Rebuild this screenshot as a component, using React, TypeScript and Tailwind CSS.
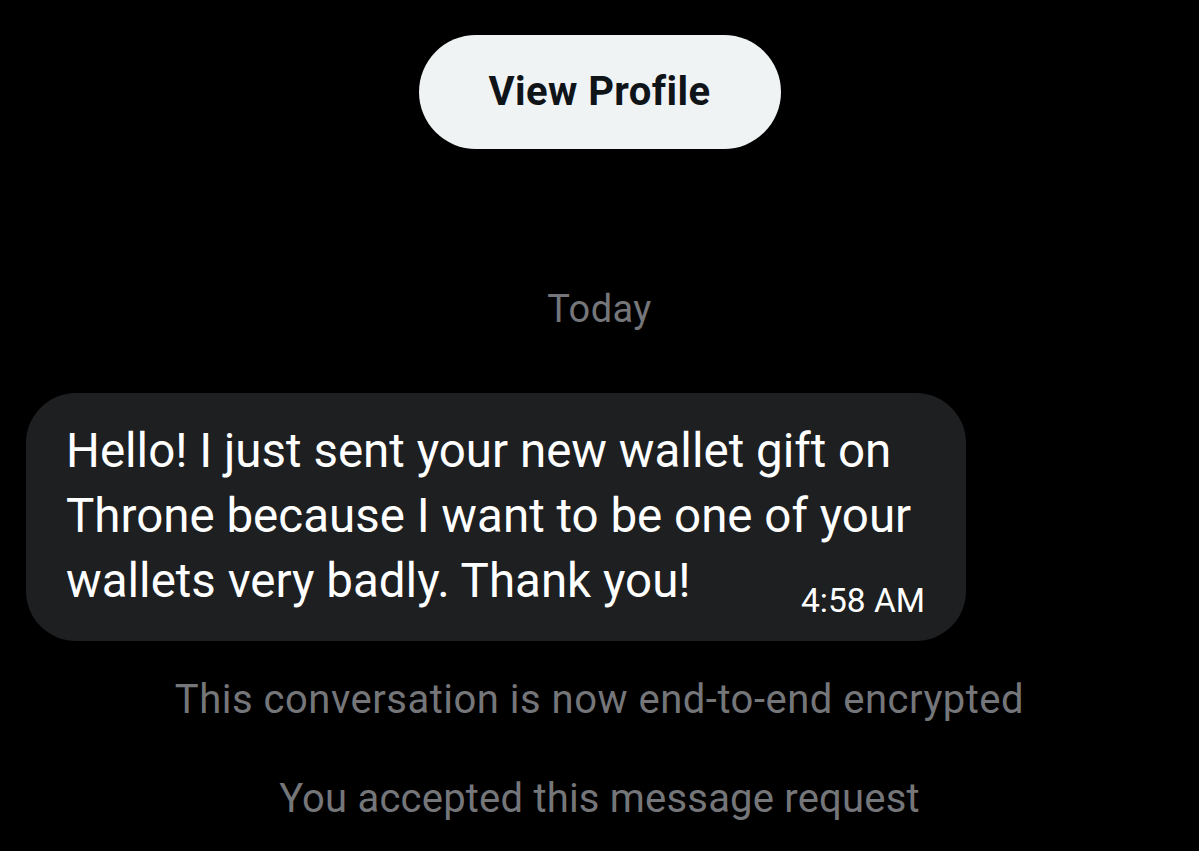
import React from 'react';

const App = () => {
  return (
    <div
      className="min-h-screen w-full bg-black flex flex-col items-center text-white"
      style={{ fontFamily: 'Roboto, "Liberation Sans", sans-serif' }}
    >
      {/* Profile button */}
      <button className="mt-[35px] h-[114px] w-[362px] rounded-full bg-[#eff3f4] text-[#0f1419] text-[40px] font-bold tracking-[0.4px]">
        View Profile
      </button>

      {/* Date divider */}
      <div className="mt-[138px] text-[38px] leading-[44px] tracking-[0.4px] text-[#75767a]">Today</div>

      {/* Message bubble */}
      <div className="self-start ml-[26px] mt-[62px] w-[940px] rounded-[50px] bg-[#1e1f21] pl-[40px] pr-[41px] pt-[26px] pb-[27px]">
        <div className="text-[47.5px] leading-[65px] text-white">
          <div>Hello! I just sent your new wallet gift on</div>
          <div>Throne because I want to be one of your</div>
          <div className="flex items-end justify-between">
            <span>wallets very badly. Thank you!</span>
            <span className="text-[33.5px] leading-[40px] mb-[-7px]">4:58 AM</span>
          </div>
        </div>
      </div>

      {/* System notices */}
      <div className="mt-[36px] text-[40px] leading-[46px] text-[#75767a] tracking-[0.5px]">
        This conversation is now end-to-end encrypted
      </div>
      <div className="mt-[53px] text-[40px] leading-[46px] text-[#75767a] tracking-[0.2px]">
        You accepted this message request
      </div>
    </div>
  );
};

export default App;
